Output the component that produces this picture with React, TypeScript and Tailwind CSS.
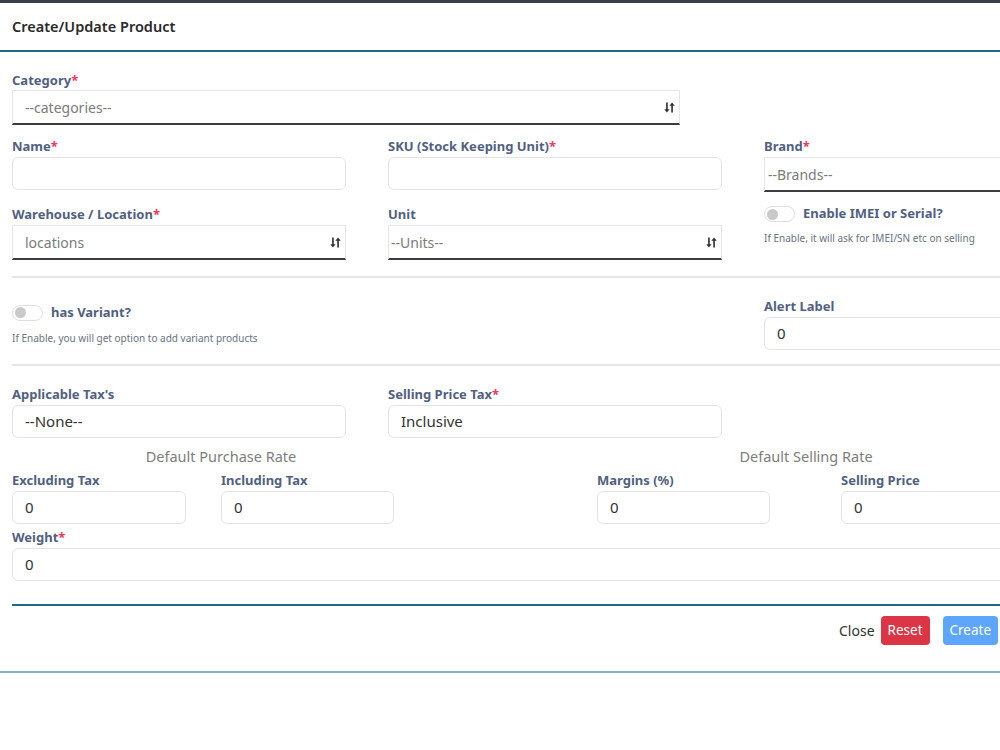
import React from 'react'

const font = { fontFamily: '"Noto Sans", "Open Sans", Arial, sans-serif' };

const SortIcon = () => (
    <svg width="11" height="11" viewBox="0 0 12 12" className="shrink-0">
        <path d="M2.3 0.5h1.8v7.5h2l-2.9 3.5-2.9-3.5h2z" fill="#333" />
        <path d="M7.9 11.5h1.8v-7.5h2l-2.9-3.5-2.9 3.5h2z" fill="#333" />
    </svg>
);

const Label = ({ text, required }: { text: string; required?: boolean }) => (
    <div className="text-[13px] font-bold leading-[18px] text-[#525f7f] whitespace-nowrap">
        {text}
        {required && <span className="text-[#f5365c]">*</span>}
    </div>
);

const TextBox = ({ value, width }: { value?: string; width: string }) => (
    <div className={`${width} h-[33px] mt-[2px] flex items-center px-[12px] border border-[#e3e3e3] rounded-[6px] bg-white text-[15px] text-[#333]`}>
        {value}
    </div>
);

const SelectBox = ({ value, width, icon = true, pad = 'pl-[12px]' }: { value: string; width: string; icon?: boolean; pad?: string }) => (
    <div className={`${width} h-[35px] mt-[2px] flex items-center justify-between ${pad} pr-[4px] border border-[#e5e5e5] border-b-2 border-b-[#3c3c3c] bg-white`}>
        <span className="text-[14px] text-[#7b7b7b]">{value}</span>
        {icon && <SortIcon />}
    </div>
);

const Toggle = () => (
    <div className="w-[31px] h-[16px] rounded-full border border-[#dedede] bg-white flex items-center pl-[2px] shrink-0">
        <div className="w-[11px] h-[11px] rounded-full bg-[#c9c9c9]" />
    </div>
);

const Divider = () => <div className="h-[2px] bg-[#e6e6e6] w-[1100px]" />;

export default function App() {
    return (
        <div className="w-[1000px] h-[750px] overflow-hidden bg-white" style={font}>
            <div className="h-[3px] bg-[#3a3d4a]" />
            {/* Header */}
            <div className="h-[49px] flex items-center px-[12px] border-b-2 border-[#1e6c84]">
                <h2 className="text-[14.5px] font-semibold text-[#2a2a2a]">Create/Update Product</h2>
            </div>

            <div className="pl-[12px] pt-[19px]">
                {/* Category */}
                <Label text="Category" required />
                <div className="mt-[1px]">
                    <div className="w-[668px] h-[35px] flex items-center justify-between pl-[12px] pr-[4px] border border-[#e5e5e5] border-b-2 border-b-[#3c3c3c]">
                        <span className="text-[14px] text-[#7b7b7b]">--categories--</span>
                        <SortIcon />
                    </div>
                </div>

                {/* Name / SKU / Brand */}
                <div className="grid grid-cols-[334px_334px_334px] gap-x-[42px] mt-[12px]">
                    <div>
                        <Label text="Name" required />
                        <TextBox width="w-[334px]" />
                    </div>
                    <div>
                        <Label text="SKU (Stock Keeping Unit)" required />
                        <TextBox width="w-[334px]" />
                    </div>
                    <div>
                        <Label text="Brand" required />
                        <SelectBox value="--Brands--" width="w-[334px]" icon={false} pad="pl-[3px]" />
                    </div>
                </div>

                <div className="grid grid-cols-[334px_334px_334px] gap-x-[42px] mt-[13px]">
                    <div>
                        <Label text="Warehouse / Location" required />
                        <SelectBox value="locations" width="w-[334px]" />
                    </div>
                    <div>
                        <Label text="Unit" />
                        <SelectBox value="--Units--" width="w-[334px]" pad="pl-[2px]" />
                    </div>
                    <div>
                        <div className="flex items-center gap-[8px] h-[18px]">
                            <Toggle />
                            <span className="text-[13px] font-bold text-[#525f7f]">Enable IMEI or Serial?</span>
                        </div>
                        <div className="text-[10px] text-[#6b7280] mt-[8px]">If Enable, it will ask for IMEI/SN etc on selling</div>
                    </div>
                </div>

                <div className="mt-[16px]"><Divider /></div>

                {/* Variant / Alert */}
                <div className="grid grid-cols-[710px_334px] gap-x-[42px] h-[86px]">
                    <div className="pt-[25px]">
                        <div className="flex items-center gap-[8px]">
                            <Toggle />
                            <span className="text-[13px] font-bold text-[#525f7f]">has Variant?</span>
                        </div>
                        <div className="text-[10px] text-[#6b7280] mt-[8px]">If Enable, you will get option to add variant products</div>
                    </div>
                    <div className="pt-[19px]">
                        <Label text="Alert Label" />
                        <TextBox value="0" width="w-[334px]" />
                    </div>
                </div>

                <Divider />

                {/* Tax */}
                <div className="grid grid-cols-[334px_334px] gap-x-[42px] mt-[19px]">
                    <div>
                        <Label text="Applicable Tax's" />
                        <TextBox value="--None--" width="w-[334px]" />
                    </div>
                    <div>
                        <Label text="Selling Price Tax" required />
                        <TextBox value="Inclusive" width="w-[334px]" />
                    </div>
                </div>

                {/* Rates */}
                <div className="flex mt-[8px]">
                    <div className="w-[418px] shrink-0">
                        <div className="text-center text-[14.5px] text-[#7d7d7d] leading-[20px]">Default Purchase Rate</div>
                        <div className="flex gap-[35px] mt-[5px]">
                            <div>
                                <Label text="Excluding Tax" />
                                <TextBox value="0" width="w-[174px]" />
                            </div>
                            <div>
                                <Label text="Including Tax" />
                                <TextBox value="0" width="w-[173px]" />
                            </div>
                        </div>
                    </div>
                    <div className="w-[418px] ml-[167px] shrink-0">
                        <div className="text-center text-[14.5px] text-[#7d7d7d] leading-[20px]">Default Selling Rate</div>
                        <div className="flex gap-[71px] mt-[5px]">
                            <div>
                                <Label text="Margins (%)" />
                                <TextBox value="0" width="w-[173px]" />
                            </div>
                            <div>
                                <Label text="Selling Price" />
                                <TextBox value="0" width="w-[173px]" />
                            </div>
                        </div>
                    </div>
                </div>

                {/* Weight */}
                <div className="mt-[4px]">
                    <Label text="Weight" required />
                    <TextBox value="0" width="w-[1000px]" />
                </div>

                <div className="h-[2px] bg-[#1e6c84] w-[1000px] mt-[23px]" />

                {/* Footer */}
                <div className="flex items-center h-[48px] pl-[827px] pt-[1px]">
                    <span className="text-[14px] text-[#333] mr-[6px]">Close</span>
                    <button className="h-[29px] px-[7px] rounded-[4px] bg-[#dc3545] text-white text-[13.5px] mr-[13px]">Reset</button>
                    <button className="h-[29px] px-[7px] rounded-[4px] bg-[#5ea6fb] text-white text-[13.5px] shrink-0">Create</button>
                </div>
            </div>

            <div className="h-[2px] bg-[#86b5bf] mt-[17px]" />
        </div>
    );
}
